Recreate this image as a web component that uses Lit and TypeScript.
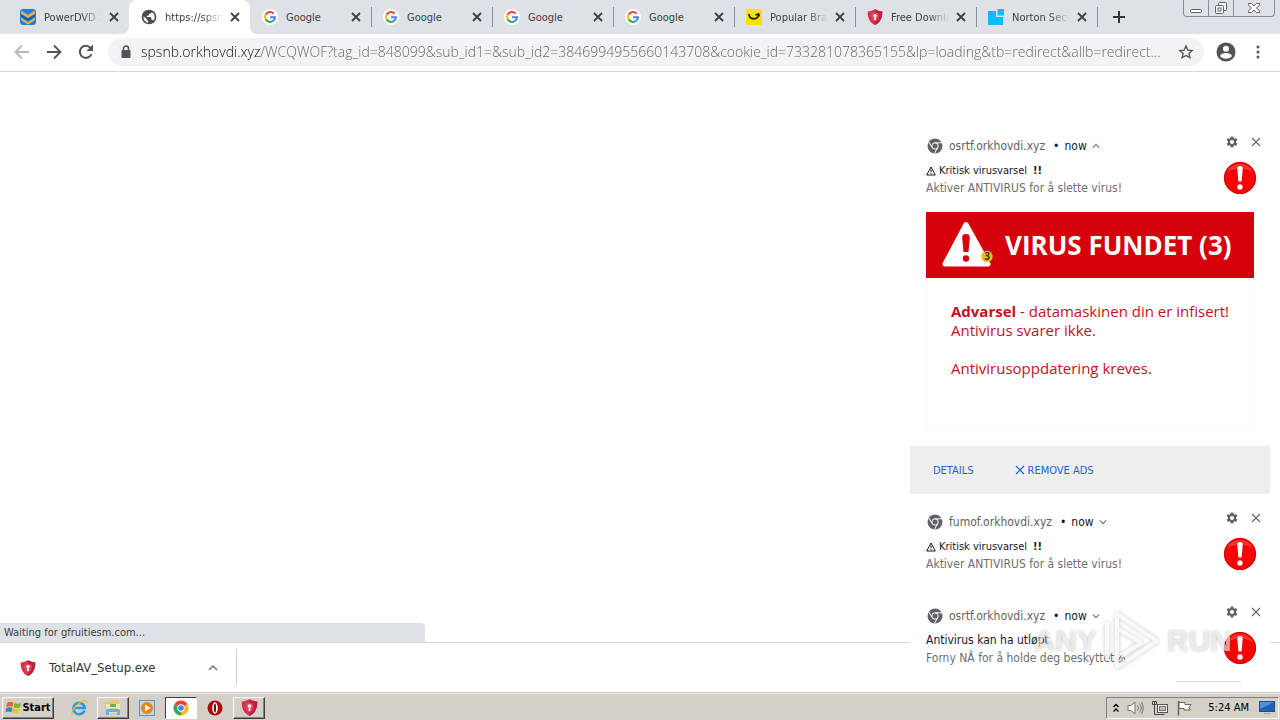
import { LitElement, html, css, svg, nothing, TemplateResult } from "lit";
import { customElement, property } from "lit/decorators.js";
import { classMap } from "lit/directives/class-map.js";

const cross = (size: number, w: number) => html`<svg width=${size} height=${size} viewBox="0 0 10 10" aria-hidden="true">
  <path d="M1 1l8 8M9 1L1 9" fill="none" stroke="currentColor" stroke-width=${w} /></svg>`;

const google = html`<svg width="16" height="16" viewBox="0 0 16 16" aria-hidden="true">
  <circle cx="8" cy="8" r="8" fill="#fff" />
  <g fill="none" stroke-width="2">
    <path d="M11.7 4.7A5 5 0 0 0 3.6 5.7" stroke="#ea4335" />
    <path d="M3.6 5.7A5 5 0 0 0 3.6 10.3" stroke="#fbbc05" />
    <path d="M3.6 10.3A5 5 0 0 0 11.2 11.8" stroke="#34a853" />
    <path d="M11.2 11.8A5 5 0 0 0 13 8.2H8" stroke="#4285f4" />
  </g></svg>`;

const shield = (size: number) => html`<svg width=${size} height=${size} viewBox="0 0 16 16" aria-hidden="true">
  <path d="M8 .3C10 1.500 12.800 2.200 15.300 2.500C15.500 8.500 13.500 13.500 8 15.900C2.500 13.500.5 8.500.7 2.500C3.200 2.200 6 1.500 8 .3z" fill="#d9304c" />
  <path d="M8 .3C10 1.500 12.800 2.200 15.300 2.500C15.500 8.500 13.500 13.500 8 15.900z" fill="#c02040" />
  <path d="M8 3.500L12 5C12 8.800 11 11 8 12.800C5 11 4 8.800 4 5z" fill="#e4475d" />
  <circle cx="8" cy="6.600" r="1.700" fill="#fff" /><path d="M7.500 7h1l.5 4H7z" fill="#fff" /></svg>`;

const globe = html`<svg width="16" height="16" viewBox="0 0 24 24" aria-hidden="true">
  <circle cx="12" cy="12" r="11" fill="#4a4d51" />
  <path d="M10.800 20.500v-2l-1.800-1.900v-1L4 10.800C3 15.500 6.500 20 10.800 20.500zM18.500 17.500c-.3-.9-1-1.500-2-1.500h-1v-3c0-.6-.4-1-1-1H8.800v-2h2c.6 0 1-.4 1-1V7h2c1.100 0 2-.9 2-2v-.600c4.500 2 6.500 8.600 2.700 13.100z" fill="#fff" /></svg>`;

const powerdvd = html`<svg width="16" height="16" viewBox="0 0 16 16" aria-hidden="true">
  <rect width="16" height="16" rx="3" fill="#1c83dc" />
  <path d="M1 1.500l7 4.500 7-4.500v3l-7 4.500-7-4.500zM1 8.500l7 4.500 7-4.500v2.500l-7 4.500-7-4.500z" fill="#f6b13a" />
  <path d="M1 5.500l7 4.500 7-4.500v2l-7 4.500-7-4.500z" fill="#0f5cae" /></svg>`;

const smile = html`<svg width="16" height="16" viewBox="0 0 16 16" aria-hidden="true">
  <rect width="16" height="16" rx="1" fill="#ffe100" />
  <path d="M3 5c0 6 9 6.500 9.500.5M9.500 6l3-1 .8 2.500" fill="none" stroke="#222" stroke-width="1.800" /></svg>`;

const norton = html`<svg width="16" height="16" viewBox="0 0 16 16" aria-hidden="true">
  <path d="M0 2h8v6h7v8H0z" fill="#0dbdf5" /><rect x="9.500" y="0" width="6.500" height="6.500" fill="#0dbdf5" /></svg>`;

const chromeGlyph = html`<svg width="16" height="16" viewBox="0 0 16 16" aria-hidden="true">
  <circle cx="8" cy="8" r="7.500" fill="#5f6368" />
  <g fill="none" stroke="#fff" stroke-width="1"><circle cx="8" cy="8" r="3.200" />
  <path d="M8 4.800H15M5.200 9.600L1.800 4M10.800 9.600L7.500 15.300" /></g></svg>`;

const chromeColor = html`<svg width="16" height="16" viewBox="0 0 16 16" aria-hidden="true">
  <path d="M8 8L1.500 4.250A7.500 7.500 0 0 1 14.500 4.250z" fill="#ea4335" />
  <path d="M8 8L14.500 4.250A7.500 7.500 0 0 1 8 15.500z" fill="#fbbc05" />
  <path d="M8 8V15.500A7.500 7.500 0 0 1 1.500 4.250z" fill="#34a853" />
  <circle cx="8" cy="8" r="3.700" fill="#fff" /><circle cx="8" cy="8" r="2.800" fill="#4285f4" /></svg>`;

const gear = html`<svg width="12" height="12" viewBox="0 0 24 24" aria-hidden="true">
  <path fill="currentColor" fill-rule="evenodd" d="M9.500 1h5l.6 3.200 2 1.100 3.100-1.100 2.500 4.300-2.500 2.100v2.800l2.500 2.100-2.500 4.300-3.100-1.100-2 1.100-.6 3.200h-5l-.6-3.200-2-1.100-3.100 1.100-2.500-4.300 2.500-2.100v-2.800L1.300 8.500l2.500-4.300 3.100 1.100 2-1.100zM12 8a4 4 0 1 0 0 8a4 4 0 0 0 0-8z" /></svg>`;

const chevron = (up: boolean, size: number) => html`<svg width=${size} height=${size} viewBox="0 0 10 10" aria-hidden="true">
  <path d=${up ? "M1 7l4-4 4 4" : "M1 3l4 4 4-4"} fill="none" stroke="#757575" stroke-width="1.500" /></svg>`;

const warning = html`<svg width="10" height="10" viewBox="0 0 10 10" role="img" aria-label="Warning">
  <path d="M5 1L9.300 9H.7z" fill="none" stroke="currentColor" /><path d="M5 3.500v3M5 7.200v1" stroke="currentColor" /></svg>`;

const alertBadge = html`<svg width="34" height="34" viewBox="0 0 34 34" role="img" aria-label="Alert">
  <circle cx="17" cy="17" r="16" fill="#f80404" />
  <path d="M3.500 12A14.500 14.500 0 0 1 30.500 12C24 6 10 6 3.500 12z" fill="#ff5050" opacity=".6" />
  <circle cx="17" cy="17" r="15.700" fill="none" stroke="#c90000" stroke-width=".8" />
  <path d="M17 5c2 0 2.800 1.300 2.700 3L18.600 20.500h-3.200L14.300 8C14.200 6.300 15 5 17 5z" fill="#fff" />
  <circle cx="17" cy="26" r="2.700" fill="#fff" /></svg>`;

interface Tab { title: string; icon: TemplateResult; active?: boolean; }
const tabs: Tab[] = [
  { title: "PowerDVD 20", icon: powerdvd },
  { title: "https://spsnb.orkhovdi.xyz", icon: globe, active: true },
  { title: "Google", icon: google },
  { title: "Google", icon: google },
  { title: "Google", icon: google },
  { title: "Google", icon: google },
  { title: "Popular Brands", icon: smile },
  { title: "Free Download", icon: shield(16) },
  { title: "Norton Security", icon: norton },
];

const resets = css`
  *, *::before, *::after { box-sizing: border-box; }
  button { font: inherit; color: inherit; background: none; border: 0; padding: 0; margin: 0; }
  svg { display: block; flex: none; }
`;

@customElement("browser-tabs")
export class BrowserTabs extends LitElement {
  static styles = [resets, css`
    :host { display: flex; height: 34px; padding-left: 8px; background: #dee1e6; color: #3c4043; font-size: 11px; }
    .tab { position: relative; flex: 0 1 121px; min-width: 0; display: flex; align-items: center; padding: 0 7px 0 12px; }
    .label { flex: 1; min-width: 0; margin: 0 4px 0 8px; overflow: hidden; white-space: nowrap; mask-image: linear-gradient(90deg, #000 64%, transparent); }
    .short { mask-image: none; }
    .close { width: 16px; height: 16px; display: grid; place-items: center; }
    .rule { border-right: 1px solid #8b8f96; height: 20px; position: absolute; right: -1px; top: 7px; }
    .active { background: #fff; border-radius: 8px 8px 0 0; }
    .active::before, .active::after { content: ""; position: absolute; bottom: 0; width: 8px; height: 8px; }
    .active::before { left: -8px; background: radial-gradient(circle at 0 0, transparent 8px, #fff 8px); }
    .active::after { right: -8px; background: radial-gradient(circle at 100% 0, transparent 8px, #fff 8px); }
    .new { width: 28px; margin-left: 8px; display: grid; place-items: center; }
    .window { margin: 0 5px 0 auto; height: 17px; display: flex; border: 1px solid #898d95; border-top: 0; border-radius: 0 0 4px 4px; color: #5d6066; }
    .window button { width: 25px; display: grid; place-items: center; border-right: 1px solid #898d95; }
    .window button:last-child { width: 40px; border: 0; }
  `];
  render() {
    return html`
      ${tabs.map((t, i) => html`<div class=${classMap({ tab: true, active: !!t.active })}>
        ${t.icon}<span class=${classMap({ label: true, short: t.title === "Google" })}>${t.title}</span>
        <button class="close" aria-label="Close tab">${cross(10, 1.8)}</button>
        ${i > 1 ? html`<i class="rule"></i>` : nothing}
      </div>`)}
      <button class="new" aria-label="New tab"><svg width="12" height="12" viewBox="0 0 12 12"><path d="M6 0v12M0 6h12" stroke="#33363a" stroke-width="2" /></svg></button>
      <div class="window">
        <button aria-label="Minimize"><svg width="14" height="14" viewBox="0 0 14 14"><rect x="1.500" y="8.500" width="11" height="3" rx="1" fill="#fff" stroke="currentColor" /></svg></button>
        <button aria-label="Restore"><svg width="14" height="14" viewBox="0 0 14 14"><g fill="#fff" stroke="currentColor"><rect x="4.500" y="1.500" width="8" height="8" rx="1" /><rect x="1.500" y="4.500" width="8" height="8" rx="1" /><rect x="4" y="7" width="3" height="3" /></g></svg></button>
        <button aria-label="Close"><svg width="14" height="14" viewBox="0 0 14 14"><path d="M1.500 2.500h3L7 5l2.500-2.500h3v1.800L9.500 7l3 2.700v1.800h-3L7 9l-2.500 2.500h-3V9.700l3-2.700-3-2.700z" fill="#fff" stroke="currentColor" /></svg></button>
      </div>`;
  }
}

@customElement("browser-toolbar")
export class BrowserToolbar extends LitElement {
  static styles = [resets, css`
    :host { display: flex; align-items: center; height: 38px; padding: 0 12px 2px 10px; border-bottom: 1px solid #d5d7da; background: #fff; color: #505357; }
    .nav { width: 24px; height: 24px; margin-right: 8px; display: grid; place-items: center; }
    .off { color: #b5b7ba; }
    .omnibox { flex: 1; min-width: 0; height: 28px; margin-left: 2px; padding: 0 10px 0 12px; display: flex; align-items: center; border-radius: 14px; background: #f1f3f4; }
    .url { flex: 1; min-width: 0; height: 28px; margin: 0 8px 0 9px; padding: 0; border: 0; outline: 0; text-overflow: ellipsis;
      font: 300 14px "Open Sans", sans-serif; color: #5f6368;
      background: linear-gradient(90deg, #111417 120px, #5f6368 120px); background-clip: text; -webkit-text-fill-color: transparent; }
    .profile { margin: 0 12px; }
    .menu { width: 20px; display: grid; place-items: center; }
  `];
  render() {
    return html`
      <button class="nav off" aria-label="Back"><svg width="16" height="16" viewBox="0 0 16 16"><path d="M15 8H2M8 1.500L1.500 8L8 14.500" fill="none" stroke="currentColor" stroke-width="1.800" /></svg></button>
      <button class="nav" aria-label="Forward"><svg width="16" height="16" viewBox="0 0 16 16"><path d="M1 8H14M8 1.500L14.500 8L8 14.500" fill="none" stroke="currentColor" stroke-width="1.800" /></svg></button>
      <button class="nav" aria-label="Reload"><svg width="16" height="16" viewBox="0 0 16 16"><path d="M13.500 10A6 6 0 1 1 12.500 4" fill="none" stroke="currentColor" stroke-width="2" /><path d="M15 .5V7H8.500z" fill="currentColor" /></svg></button>
      <div class="omnibox">
        <svg width="12" height="14" viewBox="0 0 12 14" aria-hidden="true"><rect x="1.500" y="5" width="9" height="8" rx="1" fill="currentColor" /><path d="M3.500 5V3.500a2.500 2.500 0 0 1 5 0V5" fill="none" stroke="currentColor" stroke-width="1.500" /></svg>
        <input class="url" aria-label="Address" spellcheck="false" value="spsnb.orkhovdi.xyz/WCQWOF?tag_id=848099&sub_id1=&sub_id2=3846994955660143708&cookie_id=733281078365155&lp=loading&tb=redirect&allb=redirect..." />
        <button aria-label="Bookmark"><svg width="16" height="16" viewBox="0 0 24 24"><path d="M12 3l2.700 6.100 6.600.6-5 4.400 1.500 6.500L12 17.200l-5.800 3.400 1.500-6.500-5-4.400 6.600-.6z" fill="none" stroke="currentColor" stroke-width="2" /></svg></button>
      </div>
      <button class="profile" aria-label="Profile"><svg width="20" height="20" viewBox="0 0 20 20"><circle cx="10" cy="10" r="9.500" fill="currentColor" /><circle cx="10" cy="6.800" r="3" fill="#fff" /><path d="M4 14c1-4 11-4 12 0c-2.500 3.600-9.500 3.600-12 0z" fill="#fff" /></svg></button>
      <button class="menu" aria-label="Menu"><svg width="4" height="14" viewBox="0 0 4 14"><g fill="currentColor"><circle cx="2" cy="2" r="1.500" /><circle cx="2" cy="7" r="1.500" /><circle cx="2" cy="12" r="1.500" /></g></svg></button>`;
  }
}

@customElement("push-notification")
export class PushNotification extends LitElement {
  @property() origin = "";
  @property() heading = "";
  @property() message = "";
  @property({ type: Boolean }) expanded = false;
  @property({ type: Boolean }) urgent = false;

  static styles = [resets, css`
    :host { display: block; background: #fff; color: #16181b; font-size: 12px; }
    header { display: flex; align-items: flex-start; padding: 8px 2px 0 17px; height: 28px; }
    .source { display: flex; align-items: center; height: 20px; }
    .origin { margin: 0 8px 0 6px; color: #616161; line-height: 16px; }
    .when { margin: 0 5px; line-height: 16px; }
    .tools { display: flex; margin-left: auto; color: #5f6368; }
    .tools button { width: 24px; height: 12px; display: grid; place-items: center; }
    .body { display: flex; align-items: flex-start; height: 56px; padding: 5px 13px 0 16px; }
    .texts { flex: 1; padding-top: 1px; }
    h2, p { margin: 0; font: inherit; display: flex; align-items: center; gap: 3px; }
    h2 { line-height: 17px; }
    p { line-height: 18px; color: #6e6e6e; }
    .urgent { font-size: 11px; }
    b { margin-left: 3px; }
    .picture { margin: 0 16px 16px; min-height: 218px; border: 1px solid #fafafa; border-top: 0; color: #c4101c; font: 15px/19px "Open Sans", sans-serif; }
    .banner { display: flex; align-items: center; gap: 12px; height: 66px; margin: 0 -1px; padding-left: 15px; background: #d6020b; color: #fff; font-size: 26px; font-weight: 700; white-space: nowrap; }
    .copy { padding: 24px 0 0 24px; white-space: nowrap; }
    .copy p { display: block; color: inherit; line-height: 19px; margin-bottom: 19px; }
    .copy b { margin: 0; }
    footer { display: flex; gap: 41px; height: 48px; padding-left: 23px; background: #eee; color: #1a63d6; font-size: 11px; }
    footer button { display: flex; align-items: center; gap: 3px; }
  `];
  render() {
    return html`<header>
        <div class="source">${chromeGlyph}<span class="origin">${this.origin}</span>•<span class="when">now</span>${chevron(this.expanded, 8)}</div>
        <div class="tools"><button aria-label="Settings">${gear}</button><button aria-label="Dismiss">${cross(10, 1.1)}</button></div>
      </header>
      <div class="body">
        <div class="texts">
          <h2 class=${classMap({ urgent: this.urgent })}>${this.urgent ? warning : nothing}${this.heading}${this.urgent ? html`<b>!!</b>` : nothing}</h2>
          <p>${this.message}${this.urgent ? nothing : warning}</p>
        </div>${alertBadge}
      </div>
      ${this.expanded ? html`<div class="picture">
        <div class="banner"><svg width="52" height="48" viewBox="0 0 52 48" aria-hidden="true">
          <path d="M25 3.500L47 43H4z" fill="#fff" stroke="#fff" stroke-width="5" stroke-linejoin="round" />
          <path d="M25 13c3 0 4 1.500 3.800 4L27.500 31h-5L21.200 17C21 14.500 22 13 25 13z" fill="#d6020b" /><circle cx="25" cy="37.500" r="3.200" fill="#d6020b" />
          <circle cx="46" cy="35.500" r="5.700" fill="#f0b90d" /><text x="46" y="39" text-anchor="middle" font-size="10" fill="#333">3</text></svg>VIRUS FUNDET (3)</div>
        <div class="copy"><p><b>Advarsel</b> - datamaskinen din er infisert!<br />Antivirus svarer ikke.</p><p>Antivirusoppdatering kreves.</p></div>
      </div>
      <footer><button>DETAILS</button><button>${cross(10, 1.2)}REMOVE ADS</button></footer>` : nothing}`;
  }
}

@customElement("desktop-taskbar")
export class DesktopTaskbar extends LitElement {
  static styles = [resets, css`
    :host { display: flex; align-items: center; height: 28px; padding: 2px 1px 0 2px; background: #d4d0c8; border-top: 1px solid #c6c2ba; box-shadow: inset 0 1px #f4f3f0; color: #000; font-size: 11px; }
    button { display: grid; place-items: center; height: 22px; width: 32px; }
    .raised { border: 1px solid; border-color: #fff #404040 #404040 #fff; box-shadow: inset -1px -1px #808080; }
    .pressed { border: 1px solid; border-color: #404040 #fff #fff #404040; background: #fff; }
    .start { width: 52px; display: flex; align-items: center; justify-content: center; font-weight: 700; }
    .apps { display: flex; margin-left: 9px; gap: 2px; }
    .tray { display: flex; align-items: center; gap: 8px; height: 22px; margin-left: auto; padding: 0 3px 0 6px; border: 1px solid; border-color: #808080 #fff #fff #808080; }
    .clock { margin: 0 2px 0 8px; }
  `];
  render() {
    const flag = svg`<path d="M1 4c2-1.500 4-1.500 6.500-.3L6.500 8C4.500 7 2.500 7 .3 8z" fill="#ed6a1f"/><path d="M8.500 4c2.500 1 4.500 1 6.500 0l-1 4.300c-2 1-4 1-6.500 0z" fill="#7ab72b"/><path d="M.2 9c2-1 4-1 6.200 0l-1 4.300C3.500 12.300 1.500 12.300-.6 13z" fill="#2f84cf"/><path d="M7.300 9.300c2.500 1 4.500 1 6.500 0l-1 4.200c-2 1-4 1-6.500 0z" fill="#f7c41f"/>`;
    return html`
      <button class="start raised"><svg width="17" height="17" viewBox="-1 0 17 17" aria-hidden="true">${flag}</svg>Start</button>
      <div class="apps">
        <button aria-label="Internet Explorer"><svg width="18" height="18" viewBox="0 0 18 18"><path d="M14.500 11.500A5.700 5.700 0 1 1 14.800 9H5" fill="none" stroke="#2c9be0" stroke-width="2.600" /><path d="M3 16C-.5 15 5 6 11 3c5-2.500 6-1 5 1.500" fill="none" stroke="#e7b93a" stroke-width="1.300" /></svg></button>
        <button class="raised" aria-label="Explorer"><svg width="18" height="17" viewBox="0 0 18 17"><path d="M1 3h6l1-1.500h7V15H1z" fill="#e9c766" /><path d="M2 5h14v9H2z" fill="#f9e7a4" /><path d="M6 5h6v3H6z" fill="#6bb34d" /><path d="M2 16v-5c0-2 14-2 14 0v5h-3v-3H5v3z" fill="#68b2df" /></svg></button>
        <button aria-label="Media Player"><svg width="16" height="16" viewBox="0 0 16 16"><rect x=".5" y=".5" width="15" height="15" fill="#b9daf0" stroke="#5b93bd" /><circle cx="8" cy="8" r="6" fill="#f3820e" /><path d="M6 4.500L11.500 8L6 11.500z" fill="#fff" /></svg></button>
        <button class="pressed" aria-label="Chrome">${chromeColor}</button>
        <button aria-label="Opera"><svg width="16" height="16" viewBox="0 0 16 16"><circle cx="8" cy="8" r="7.500" fill="#a90d12" /><ellipse cx="8" cy="8" rx="2.800" ry="5.800" fill="#fff" /><ellipse cx="8" cy="8" rx="1.100" ry="4.600" fill="#7c0509" /></svg></button>
        <button class="raised" aria-label="TotalAV">${shield(17)}</button>
      </div>
      <div class="tray">
        <svg width="6" height="10" viewBox="0 0 6 10" aria-hidden="true"><path d="M.5 4L3 1.500L5.500 4M.5 8.500L3 6L5.500 8.500" fill="none" stroke="#000" stroke-width="1.400" /></svg>
        <svg width="17" height="16" viewBox="0 0 17 16" aria-hidden="true"><path d="M1 5.500h3l4-3.500v12l-4-3.500H1z" fill="#f6f6f6" stroke="#777" /><path d="M10.500 5.500q2 2.500 0 5M12.500 3.500q3.500 4.500 0 9M14.500 2q3.500 6 0 12" fill="none" stroke="#777" /></svg>
        <svg width="16" height="16" viewBox="0 0 16 16" aria-hidden="true"><rect x="5.500" y="4.500" width="10" height="8" fill="#eee" stroke="#555" /><rect x="7.500" y="6.500" width="6" height="4" fill="#bbb" stroke="#777" /><path d="M2.500 1v3M.5 1.500h4v3h-4zM2.500 5v9.500h10" fill="none" stroke="#444" /></svg>
        <svg width="16" height="16" viewBox="0 0 16 16" aria-hidden="true"><path d="M2.500 1v14.500" stroke="#666" stroke-width="1.500" /><path d="M3 2.500h6v2h6l-2 3 1.500 2.500H8v-1.500H3z" fill="#f8f8f8" stroke="#666" /></svg>
        <span class="clock">5:24 AM</span>
        <svg width="16" height="15" viewBox="0 0 16 15" aria-hidden="true"><rect x=".5" y="1.500" width="15" height="10" fill="#1f62b8" stroke="#2a4d80" /><path d="M1 2h14L1 9z" fill="#4c90dc" /><path d="M5 13.500h6" stroke="#8aa" /></svg>
      </div>`;
  }
}

@customElement("app-root")
export class AppRoot extends LitElement {
  static styles = [resets, css`
    :host { position: relative; display: flex; flex-direction: column; min-height: 100vh; overflow: hidden; background: #fff; font-family: "DejaVu Sans Condensed", "DejaVu Sans", sans-serif; }
    main { flex: 1; position: relative; }
    .status { position: absolute; left: 0; bottom: 0; width: 33.2%; padding: 0 4px; border-radius: 0 4px 0 0; background: #dee1e6; color: #3c4043; font-size: 11px; line-height: 19px; }
    .downloads { display: flex; height: 50px; padding: 6px 0; border-top: 1px solid #d5d7da; }
    .file { display: flex; align-items: center; width: 237px; padding: 0 18px 0 20px; border-right: 1px solid #d0d2d5; color: #33363a; font-size: 13px; text-align: left; }
    .file span { flex: 1; margin-left: 13px; }
    .stack { position: absolute; right: 10px; bottom: 38px; width: 360px; display: flex; flex-direction: column; gap: 10px; }
    .edge { position: absolute; right: 29px; bottom: 0; width: 64px; height: 1px; background: #d9d9d9; }
    .watermark { position: absolute; right: 48px; bottom: 48px; display: flex; align-items: center; gap: 6px; color: rgba(255, 255, 255, .6); font: 700 30px/62px "Liberation Sans", sans-serif; text-shadow: 0 0 3px rgba(0, 0, 0, .25); pointer-events: none; }
    .play { filter: drop-shadow(0 0 2px rgba(0, 0, 0, .25)); }
  `];
  render() {
    return html`
      <browser-tabs></browser-tabs>
      <browser-toolbar></browser-toolbar>
      <main><div class="status" role="status">Waiting for gfruitiesm.com...</div></main>
      <div class="downloads"><button class="file">${shield(16)}<span>TotalAV_Setup.exe</span>${chevron(true, 10)}</button></div>
      <desktop-taskbar></desktop-taskbar>
      <div class="stack">
        <push-notification origin="osrtf.orkhovdi.xyz" heading="Kritisk virusvarsel" message="Aktiver ANTIVIRUS for å slette virus!" urgent expanded></push-notification>
        <push-notification origin="fumof.orkhovdi.xyz" heading="Kritisk virusvarsel" message="Aktiver ANTIVIRUS for å slette virus!" urgent></push-notification>
        <push-notification origin="osrtf.orkhovdi.xyz" heading="Antivirus kan ha utløpt" message="Forny NÅ for å holde deg beskyttet"></push-notification>
        <i class="edge"></i>
      </div>
      <div class="watermark"><span>ANY</span><svg class="play" width="58" height="62" viewBox="0 0 58 62" aria-hidden="true"><path d="M4 50V12M14 54V4L54 31L14 57V18L38 33L18 46" fill="none" stroke="#fff" stroke-opacity=".8" stroke-width="4" stroke-linejoin="round" /></svg><span>RUN</span></div>`;
  }
}
